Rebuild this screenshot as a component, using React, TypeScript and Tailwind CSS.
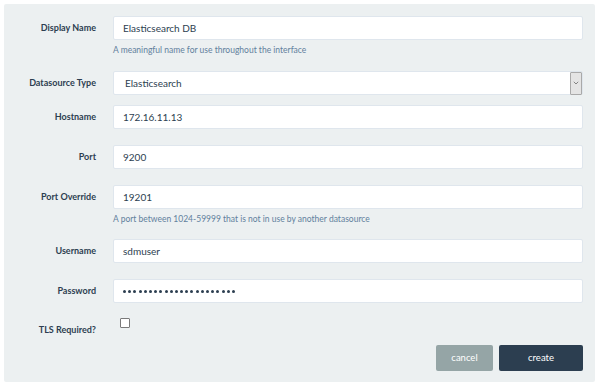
import React from "react";

const font = { fontFamily: "Lato, 'Open Sans', sans-serif" };

function Label({ children }: { children: React.ReactNode }) {
  return (
    <div className="w-[92px] shrink-0 h-[24px] flex items-center justify-end text-[9px] font-bold text-[#2c3e50]">
      {children}
    </div>
  );
}

function Input({ value }: { value: string }) {
  return (
    <div className="h-[24px] bg-white border border-[#dfe6ed] rounded-[2px] flex items-center pl-[9px] text-[10px] text-[#2c3e50]">
      {value}
    </div>
  );
}

function Help({ children }: { children: React.ReactNode }) {
  return <div className="mt-[4px] h-[12px] leading-[12px] text-[8.5px] text-[#62809d]">{children}</div>;
}

export default function App() {
  return (
    <div className="w-[600px] h-[386px] bg-white pt-[4px] pl-[4px]" style={font}>
      <div className="w-[591px] h-[378px] bg-[#ecf0f1] rounded-[2px] pt-[12px] pr-[12px] flex flex-col">
        <div className="flex gap-[17px]">
          <Label>Display Name</Label>
          <div className="flex-1">
            <Input value="Elasticsearch DB" />
            <Help>A meaningful name for use throughout the interface</Help>
          </div>
        </div>
        <div className="flex gap-[17px] mt-[15px]">
          <Label>Datasource Type</Label>
          <div className="flex-1 h-[24px] bg-white border border-[#dfe6ed] rounded-[2px] flex items-center">
            <div className="flex-1 pl-[11px] text-[10px] text-[#2c3e50]">Elasticsearch</div>
            <div className="w-[12px] h-[23px] bg-[#e4e4e4] border border-[#a9a9a9] rounded-[1px] flex items-center justify-center">
              <svg width="6" height="4" viewBox="0 0 6 4">
                <path d="M0.8 0.8 L3 3 L5.2 0.8" fill="none" stroke="#777" strokeWidth="0.9" />
              </svg>
            </div>
          </div>
        </div>
        <div className="flex gap-[17px] mt-[10px]">
          <Label>Hostname</Label>
          <div className="flex-1">
            <Input value="172.16.11.13" />
          </div>
        </div>
        <div className="flex gap-[17px] mt-[16px]">
          <Label>Port</Label>
          <div className="flex-1">
            <Input value="9200" />
          </div>
        </div>
        <div className="flex gap-[17px] mt-[16px]">
          <Label>Port Override</Label>
          <div className="flex-1">
            <Input value="19201" />
            <Help>A port between 1024-59999 that is not in use by another datasource</Help>
          </div>
        </div>
        <div className="flex gap-[17px] mt-[14px]">
          <Label>Username</Label>
          <div className="flex-1">
            <Input value="sdmuser" />
          </div>
        </div>
        <div className="flex gap-[17px] mt-[16px]">
          <Label>Password</Label>
          <div className="flex-1">
            <div className="h-[24px] bg-white border border-[#dfe6ed] rounded-[2px] flex items-center pl-[9px]">
              <div className="w-[112px] flex justify-between">
                {Array.from({ length: 22 }).map((_, i) => (
                  <span key={i} className="w-[3px] h-[3px] rounded-full bg-[#2c3e50]" />
                ))}
              </div>
            </div>
          </div>
        </div>
        <div className="flex gap-[17px] mt-[15px]">
          <Label>TLS Required?</Label>
          <div className="flex-1">
            <div className="ml-[7px] w-[10px] h-[10px] bg-white border border-[#7a7a7a] rounded-[1px]" />
          </div>
        </div>
        <div className="flex justify-end gap-[6px] mt-[3px]">
          <button className="w-[57px] h-[26px] bg-[#95a5a6] rounded-[2px] text-white text-[9.5px]">cancel</button>
          <button className="w-[84px] h-[26px] bg-[#2c3e50] rounded-[2px] text-white text-[9.5px]">create</button>
        </div>
      </div>
    </div>
  );
}
